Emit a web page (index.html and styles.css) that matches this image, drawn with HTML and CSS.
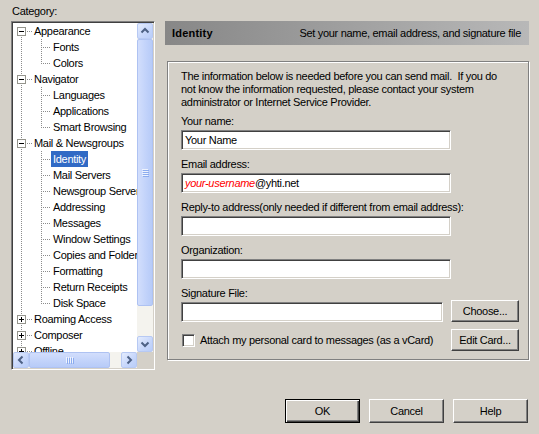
FILE: index.html
```html
<!DOCTYPE html>
<html>
<head>
<meta charset="utf-8">
<title>Preferences</title>
<link rel="stylesheet" href="styles.css">
</head>
<body>
<div class="dialog">
  <div class="main">
    <div class="left">
      <div class="cat-label">Category:</div>
      <div class="tree">
        <div class="tree-view">
          <div class="tree-list">
            <div class="row l0"><span class="c exp first"><i class="box minus"></i></span><span class="t">Appearance</span></div>
            <div class="row"><span class="c pass"></span><span class="c tee"></span><span class="t">Fonts</span></div>
            <div class="row"><span class="c pass"></span><span class="c end"></span><span class="t">Colors</span></div>
            <div class="row l0"><span class="c exp"><i class="box minus"></i></span><span class="t">Navigator</span></div>
            <div class="row"><span class="c pass"></span><span class="c tee"></span><span class="t">Languages</span></div>
            <div class="row"><span class="c pass"></span><span class="c tee"></span><span class="t">Applications</span></div>
            <div class="row"><span class="c pass"></span><span class="c end"></span><span class="t">Smart Browsing</span></div>
            <div class="row l0"><span class="c exp"><i class="box minus"></i></span><span class="t">Mail &amp; Newsgroups</span></div>
            <div class="row sel"><span class="c pass"></span><span class="c tee"></span><span class="t">Identity</span></div>
            <div class="row"><span class="c pass"></span><span class="c tee"></span><span class="t">Mail Servers</span></div>
            <div class="row"><span class="c pass"></span><span class="c tee"></span><span class="t">Newsgroup Servers</span></div>
            <div class="row"><span class="c pass"></span><span class="c tee"></span><span class="t">Addressing</span></div>
            <div class="row"><span class="c pass"></span><span class="c tee"></span><span class="t">Messages</span></div>
            <div class="row"><span class="c pass"></span><span class="c tee"></span><span class="t">Window Settings</span></div>
            <div class="row"><span class="c pass"></span><span class="c tee"></span><span class="t">Copies and Folders</span></div>
            <div class="row"><span class="c pass"></span><span class="c tee"></span><span class="t">Formatting</span></div>
            <div class="row"><span class="c pass"></span><span class="c tee"></span><span class="t">Return Receipts</span></div>
            <div class="row"><span class="c pass"></span><span class="c end"></span><span class="t">Disk Space</span></div>
            <div class="row l0"><span class="c exp"><i class="box plus"></i></span><span class="t">Roaming Access</span></div>
            <div class="row l0"><span class="c exp"><i class="box plus"></i></span><span class="t">Composer</span></div>
            <div class="row l0"><span class="c exp"><i class="box plus"></i></span><span class="t">Offline</span></div>
          </div>
          <div class="vscroll">
            <div class="sb-btn"><svg width="14" height="14" viewBox="0 0 14 14"><path d="M3.5 8.5 L7 5 L10.5 8.5" fill="none" stroke="#4d6185" stroke-width="2"/></svg></div>
            <div class="vthumb"><svg width="7" height="8" viewBox="0 0 7 8"><path d="M0 0.5h6M0 2.5h6M0 4.5h6M0 6.5h6" stroke="#eef3fe"/><path d="M1 1.5h6M1 3.5h6M1 5.5h6M1 7.5h6" stroke="#8cacef"/></svg></div>
            <div class="track"></div>
            <div class="sb-btn"><svg width="14" height="14" viewBox="0 0 14 14"><path d="M3.5 5.5 L7 9 L10.5 5.5" fill="none" stroke="#4d6185" stroke-width="2"/></svg></div>
          </div>
        </div>
        <div class="hbar">
          <div class="hscroll">
            <div class="sb-btn"><svg width="14" height="14" viewBox="0 0 14 14"><path d="M8.5 3.5 L5 7 L8.5 10.5" fill="none" stroke="#4d6185" stroke-width="2"/></svg></div>
            <div class="hthumb"><svg width="8" height="7" viewBox="0 0 8 7"><path d="M0.5 0v6M2.5 0v6M4.5 0v6M6.5 0v6" stroke="#eef3fe"/><path d="M1.5 1v6M3.5 1v6M5.5 1v6M7.5 1v6" stroke="#8cacef"/></svg></div>
            <div class="track"></div>
            <div class="sb-btn"><svg width="14" height="14" viewBox="0 0 14 14"><path d="M5.5 3.5 L9 7 L5.5 10.5" fill="none" stroke="#4d6185" stroke-width="2"/></svg></div>
          </div>
          <div class="corner"></div>
        </div>
      </div>
    </div>

    <div class="right">
      <div class="header">
        <span class="h-title">Identity</span>
        <span class="h-desc">Set your name, email address, and signature file</span>
      </div>
      <div class="group">
        <p class="intro">The information below is needed before you can send mail.&nbsp; If you do<br>not know the information requested, please contact your system<br>administrator or Internet Service Provider.</p>
        <div class="field">
          <div class="label">Your name:</div>
          <div class="textbox">Your Name</div>
        </div>
        <div class="field">
          <div class="label">Email address:</div>
          <div class="textbox"><em class="placeholder">your-username</em>@yhti.net</div>
        </div>
        <div class="field">
          <div class="label">Reply-to address(only needed if different from email address):</div>
          <div class="textbox"></div>
        </div>
        <div class="field">
          <div class="label">Organization:</div>
          <div class="textbox"></div>
        </div>
        <div class="label">Signature File:</div>
        <div class="sig-row">
          <div class="textbox sig"></div>
          <div class="btn small">Choose...</div>
        </div>
        <div class="card-row">
          <div class="check-wrap"><span class="checkbox"></span><span class="check-label">Attach my personal card to messages (as a vCard)</span></div>
          <div class="btn small">Edit Card...</div>
        </div>
      </div>
    </div>
  </div>

  <div class="buttons">
    <div class="btn default">OK</div>
    <div class="btn">Cancel</div>
    <div class="btn">Help</div>
  </div>
</div>
</body>
</html>
```

FILE: styles.css
```css
html, body {
  margin: 0;
  padding: 0;
  background: #d4d0c8;
}

body {
  width: 539px;
  height: 434px;
  overflow: hidden;
  font-family: "Liberation Sans", Arial, sans-serif;
  font-size: 11px;
  letter-spacing: -0.3px;
  color: #000;
}

.main {
  display: flex;
  padding-left: 11px;
  gap: 10px;
}

/* ---------- left: category tree ---------- */
.left {
  width: 144px;
  flex: none;
}

.cat-label {
  margin-top: 5px;
  margin-bottom: 3px;
  height: 13px;
  line-height: 13px;
  padding-left: 1px;
}

.tree {
  width: 144px;
  height: 349px;
  box-sizing: border-box;
  border: 1px solid;
  border-color: #808080 #ffffff #ffffff #808080;
  padding: 1px;
  box-shadow: inset 1px 1px #404040, inset -1px -1px #d4d0c8;
  background: #ffffff;
  display: flex;
  flex-direction: column;
}

.tree-view {
  flex: 1;
  display: flex;
  min-height: 0;
}

.tree-list {
  flex: 1;
  min-width: 0;
  overflow: hidden;
  background: #ffffff;
}

.row {
  display: flex;
  height: 16px;
  line-height: 16px;
  white-space: nowrap;
}

.c {
  flex: none;
  width: 20px;
  height: 16px;
  box-sizing: border-box;
  background-repeat: no-repeat;
}

.pass {
  background-image: repeating-linear-gradient(to bottom, #8c8c8c 0 1px, transparent 1px 2px);
  background-position: 8px 0;
  background-size: 1px 16px;
}

.tee {
  background-image:
    repeating-linear-gradient(to bottom, #8c8c8c 0 1px, transparent 1px 2px),
    repeating-linear-gradient(to right, #8c8c8c 0 1px, transparent 1px 2px);
  background-position: 8px 0, 8px 8px;
  background-size: 1px 16px, 10px 1px;
}

.end {
  background-image:
    repeating-linear-gradient(to bottom, #8c8c8c 0 1px, transparent 1px 2px),
    repeating-linear-gradient(to right, #8c8c8c 0 1px, transparent 1px 2px);
  background-position: 8px 0, 8px 8px;
  background-size: 1px 9px, 10px 1px;
}

.exp {
  padding: 4px 0 0 4px;
  background-image:
    repeating-linear-gradient(to bottom, #8c8c8c 0 1px, transparent 1px 2px),
    repeating-linear-gradient(to right, #8c8c8c 0 1px, transparent 1px 2px);
  background-position: 8px 0, 14px 8px;
  background-size: 1px 16px, 5px 1px;
}

.exp.first {
  background-position: 8px 8px, 14px 8px;
  background-size: 1px 8px, 5px 1px;
}

.box {
  display: block;
  width: 9px;
  height: 9px;
  box-sizing: border-box;
  border: 1px solid #94948c;
  background-color: #ffffff;
  background-repeat: no-repeat;
}

.box.minus {
  background-image: linear-gradient(#000, #000);
  background-position: 1px 3px;
  background-size: 5px 1px;
}

.box.plus {
  background-image: linear-gradient(#000, #000), linear-gradient(#000, #000);
  background-position: 1px 3px, 3px 1px;
  background-size: 5px 1px, 1px 5px;
}

.t {
  padding: 0 2px;
  margin-left: -2px;
}

.row.l0 .t {
  margin-left: -1px;
}

.sel .t {
  background: #316ac5;
  color: #ffffff;
}

/* scrollbars */
.vscroll {
  width: 16px;
  flex: none;
  display: flex;
  flex-direction: column;
  background: #f4f3ee;
}

.sb-btn {
  flex: none;
  width: 16px;
  height: 16px;
  box-sizing: border-box;
  border: 1px solid #b7c9f3;
  border-radius: 2px;
  background: linear-gradient(135deg, #e4ecfd 0%, #c6d6fb 60%, #b9cdf8 100%);
  display: flex;
  align-items: center;
  justify-content: center;
}

.vthumb {
  flex: none;
  height: 267px;
  box-sizing: border-box;
  border: 1px solid #aec2f2;
  border-radius: 2px;
  background: linear-gradient(to right, #d2defc, #c1d2fa 60%, #b7cbf8);
  display: flex;
  align-items: center;
  justify-content: center;
}

.track {
  flex: 1;
  background: #f4f3ee;
}

.hbar {
  height: 16px;
  flex: none;
  display: flex;
}

.hscroll {
  flex: 1;
  display: flex;
  background: #f4f3ee;
}

.hthumb {
  flex: none;
  width: 81px;
  box-sizing: border-box;
  border: 1px solid #aec2f2;
  border-radius: 2px;
  background: linear-gradient(to bottom, #d2defc, #c1d2fa 60%, #b7cbf8);
  display: flex;
  align-items: center;
  justify-content: center;
}

.corner {
  width: 16px;
  flex: none;
  background: #d4d0c8;
}

/* ---------- right panel ---------- */
.right {
  width: 364px;
  flex: none;
  padding-top: 21px;
}

.header {
  height: 24px;
  display: flex;
  align-items: center;
  justify-content: space-between;
  padding: 0 8px 0 7px;
  background: linear-gradient(to right, #878787, #b8b8b8);
}

.h-title {
  font-weight: bold;
  letter-spacing: 0.2px;
}

.group {
  margin: 16px 0 0 2px;
  width: 362px;
  height: 299px;
  box-sizing: border-box;
  border: 1px solid #808080;
  box-shadow: inset 1px 1px #ffffff, 1px 1px #ffffff;
  padding: 8px 0 0 13px;
}

.intro {
  margin: 0 0 6px 0;
  line-height: 13px;
  white-space: nowrap;
}

.label {
  height: 13px;
  line-height: 13px;
  margin-bottom: 2px;
  white-space: nowrap;
}

.field {
  margin-bottom: 8px;
}

.textbox {
  width: 270px;
  height: 20px;
  box-sizing: border-box;
  border: 1px solid;
  border-color: #808080 #ffffff #ffffff #808080;
  box-shadow: inset 1px 1px #404040, inset -1px -1px #d4d0c8;
  background: #ffffff;
  padding-left: 3px;
  line-height: 18px;
  white-space: nowrap;
}

.placeholder {
  color: #ff0000;
  font-style: italic;
}

.sig-row {
  display: flex;
  align-items: flex-end;
  margin-top: -2px;
}

.textbox.sig {
  width: 262px;
  margin-right: 8px;
}

.card-row {
  display: flex;
  align-items: center;
  margin-top: 7px;
}

.check-wrap {
  width: 270px;
  display: flex;
  align-items: center;
}

.checkbox {
  width: 13px;
  height: 13px;
  box-sizing: border-box;
  border: 1px solid;
  border-color: #808080 #ffffff #ffffff #808080;
  box-shadow: inset 1px 1px #404040, inset -1px -1px #d4d0c8;
  background: #ffffff;
  margin-left: 1px;
}

.check-label {
  margin-left: 5px;
}

/* ---------- buttons ---------- */
.btn {
  width: 75px;
  height: 24px;
  box-sizing: border-box;
  border: 1px solid;
  border-color: #ffffff #404040 #404040 #ffffff;
  box-shadow: inset -1px -1px #808080;
  background: #d4d0c8;
  display: flex;
  align-items: center;
  justify-content: center;
  white-space: nowrap;
}

.btn.small {
  width: 68px;
  height: 22px;
}

.btn.default {
  border-color: #000000;
  box-shadow: inset 1px 1px #ffffff, inset -1px -1px #404040, inset -2px -2px #808080;
}

.buttons {
  display: flex;
  justify-content: flex-end;
  gap: 9px;
  padding: 29px 11px 0 0;
}
```
